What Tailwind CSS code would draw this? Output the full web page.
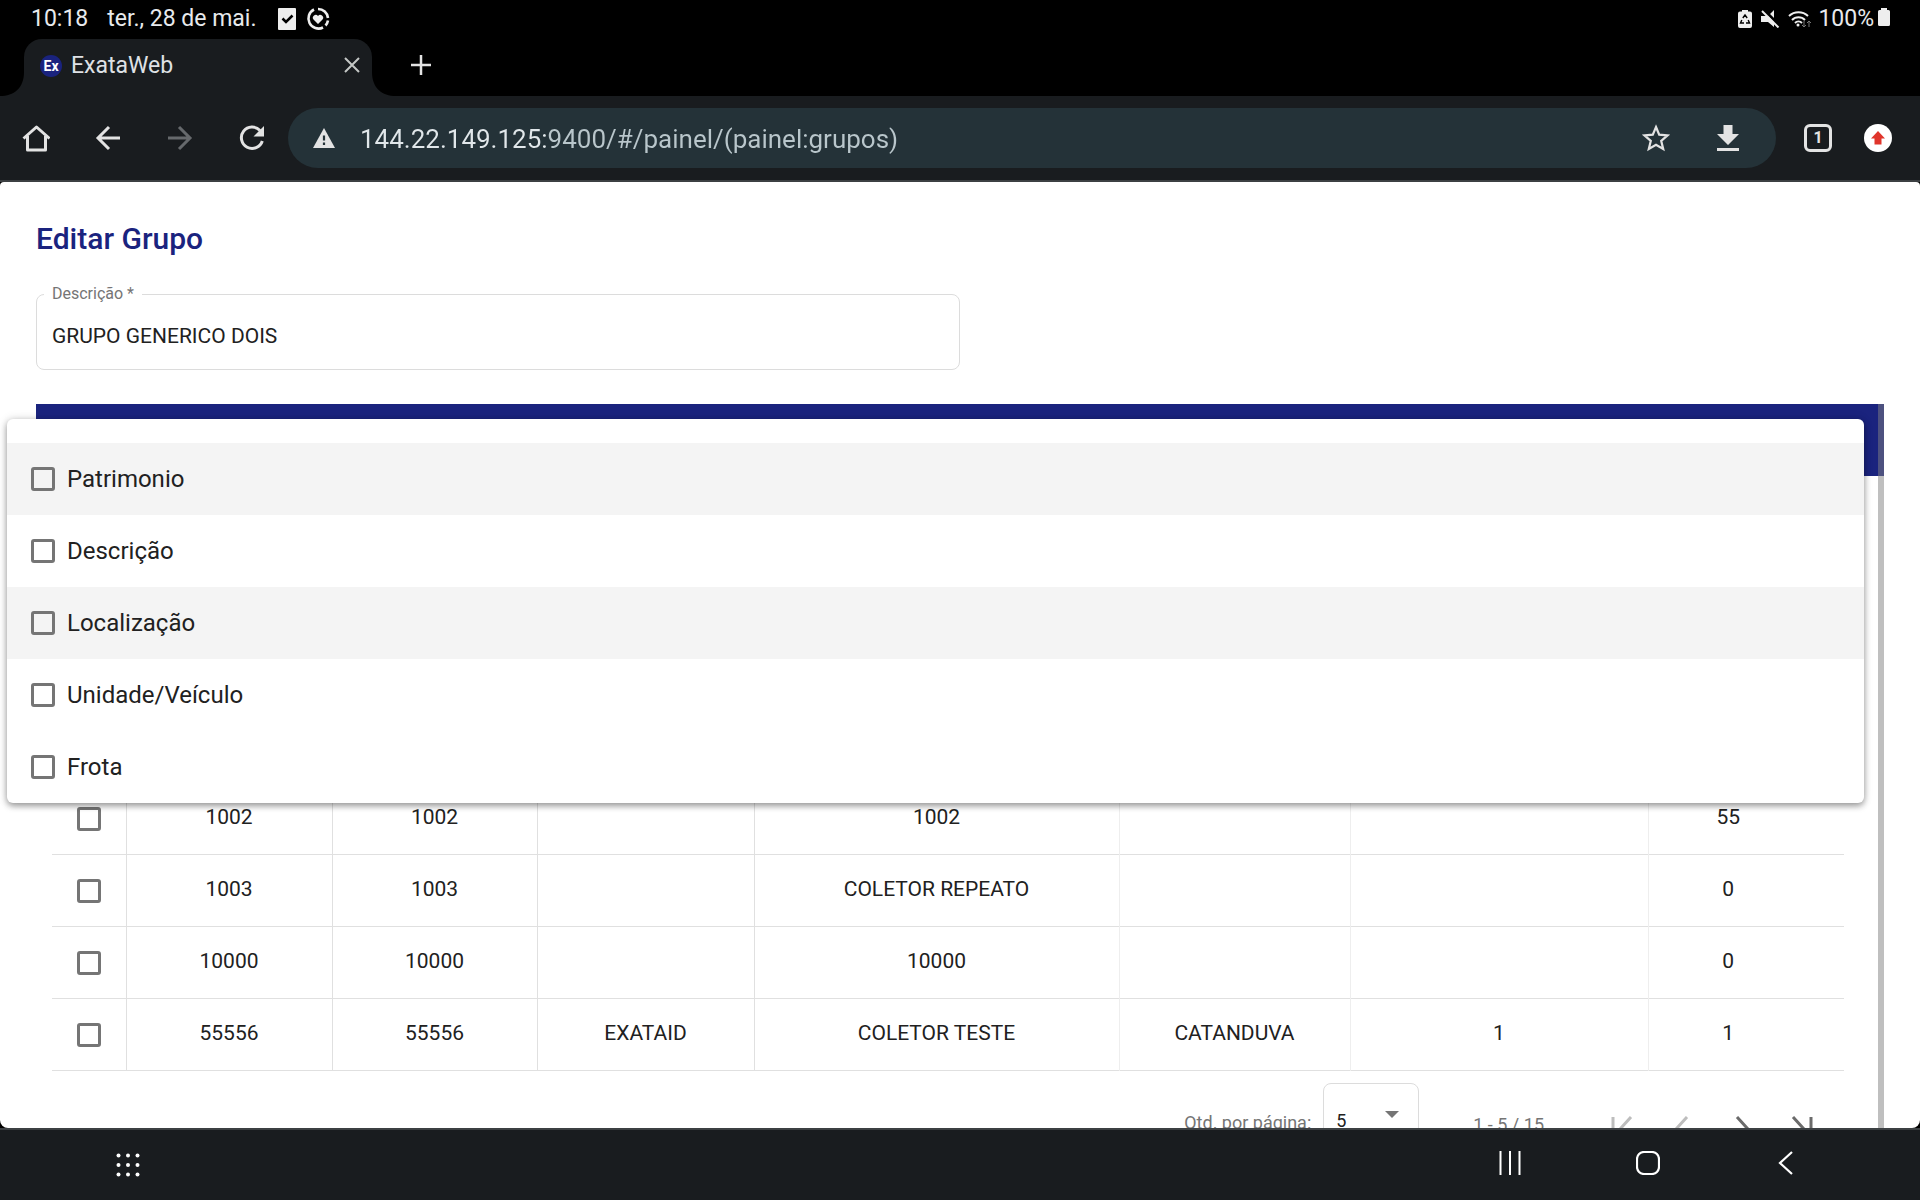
<!DOCTYPE html>
<html lang="pt-BR">
<head>
<meta charset="utf-8">
<meta name="viewport" content="width=device-width, initial-scale=1">
<title>ExataWeb</title>
<script src="https://cdn.jsdelivr.net/npm/@tailwindcss/browser@4"></script>
</head>
<body class="flex h-screen flex-col overflow-hidden bg-black font-['Roboto',sans-serif] text-[#212121]">

<!-- System status bar -->
<header class="flex h-[39px] shrink-0 items-center justify-between pr-[30px] pb-0.5 pl-[31px] text-[23px] leading-9 text-[#e8eaed]">
  <div class="flex items-center">
    <span>10:18</span>
    <span class="ml-[19px]">ter., 28 de mai.</span>
    <svg class="ml-5 size-[22px]" viewBox="0 0 22 22" fill="none"><rect x="2" width="18" height="22" rx="1" fill="#eee"/><path d="M6.500 10.500l3.500 3.500 6.500-6.500" stroke="#000" stroke-width="2.500"/></svg>
    <svg class="ml-2 size-6" viewBox="0 0 24 24" fill="none"><path d="M8 2.500a10 10 0 1 0 9 18M19.500 18.500a10 10 0 0 0 2.500-5M12 2a10 10 0 0 1 10 9" stroke="#eee" stroke-width="2.600"/><path d="M12 17l-4.500-4.500a2.700 2.700 0 0 1 4.500-3.500 2.700 2.700 0 0 1 4.500 3.500z" fill="#eee"/></svg>
  </div>
  <div class="flex items-center">
    <svg class="h-[18px] w-[14px]" viewBox="0 0 14 18"><path d="M4 0h6v1.500h2a2 2 0 0 1 2 2V16a2 2 0 0 1-2 2H2a2 2 0 0 1-2-2V3.500a2 2 0 0 1 2-2h2z" fill="#eee"/><path d="M4.800 8L7 5l2.200 3M3.800 10l-1.300 3H6M10.200 10l1.300 3H8" fill="none" stroke="#000" stroke-width="1.400"/></svg>
    <svg class="ml-[9px] h-[18px] w-[19px]" viewBox="0 0 19 18"><path d="M0 6h7l6-6v17l-6-5H0z" fill="#eee"/><path d="M3 0l17 17" stroke="#000" stroke-width="3"/><path d="M1 1l16.500 16.500" stroke="#eee" stroke-width="2"/></svg>
    <svg class="ml-2 h-[18px] w-6" viewBox="0 0 24 18" fill="none"><path d="M1 6a14 14 0 0 1 19 0M4 10a9 9 0 0 1 13 0M7 13a5 5 0 0 1 7 0" stroke="#eee" stroke-width="2"/><circle cx="10" cy="15" r="1.500" fill="#eee"/><path d="M16 11v6l-2-2m2 2l2-2M21 17v-6l-2 2m2-2l2 2" stroke="#777" stroke-width="1"/></svg>
    <span class="ml-1.5">100%</span>
    <svg class="mb-1 ml-1 h-[18px] w-3" viewBox="0 0 12 18"><path d="M3 0h6v2h1.500A1.500 1.500 0 0 1 12 3.500v13a1.500 1.500 0 0 1-1.500 1.500h-9A1.500 1.500 0 0 1 0 16.500v-13A1.500 1.500 0 0 1 1.500 2H3z" fill="#eee"/></svg>
  </div>
</header>

<!-- Tab strip -->
<div class="flex h-[57px] shrink-0 items-stretch">
  <svg class="h-full w-6" viewBox="0 0 24 57"><path d="M24 0v57H0c14 0 24-8 24-24z" fill="#191c1f"/></svg>
  <div class="flex w-[348px] items-center rounded-t-[18px] bg-[#191c1f] pr-3 pb-1 pl-4">
    <span class="flex size-[22px] items-center justify-center rounded-full bg-[#1a237e] text-sm font-bold text-white">Ex</span>
    <span class="ml-[9px] grow text-[23px] leading-9 text-[#dfe1e5]">ExataWeb</span>
    <button class="mb-0.5 flex" aria-label="Fechar guia"><svg class="size-4" viewBox="0 0 16 16"><path d="M1 1l14 14M15 1L1 15" stroke="#c4c7c5" stroke-width="2"/></svg></button>
  </div>
  <svg class="h-full w-6" viewBox="0 0 24 57"><path d="M0 0v57h24C10 57 0 49 0 33z" fill="#191c1f"/></svg>
  <button class="ml-[14px] flex items-center pb-1.5" aria-label="Nova guia"><svg class="size-[22px]" viewBox="0 0 22 22"><path d="M11 1v20M1 11h20" stroke="#e3e3e3" stroke-width="2.500"/></svg></button>
</div>

<!-- Browser toolbar -->
<nav class="flex h-[86px] shrink-0 items-center border-b-2 border-[#3c4043] bg-[#191c1f] pr-7 pl-[22px]">
  <button aria-label="Início"><svg class="size-7" viewBox="0 0 28 28"><path d="M1.500 14.500L14.500 3l13 11.500M5.500 12v14h18V12" fill="none" stroke="#e3e3e3" stroke-width="3" stroke-linejoin="round"/></svg></button>
  <button class="ml-[45px]" aria-label="Voltar"><svg class="size-[26px]" viewBox="0 0 26 26"><path d="M25 13H3M14 2L3 13l11 11" fill="none" stroke="#e3e3e3" stroke-width="3"/></svg></button>
  <button class="ml-[46px]" aria-label="Avançar"><svg class="size-[26px]" viewBox="0 0 26 26"><path d="M1 13h22M12 2l11 11-11 11" fill="none" stroke="#66696c" stroke-width="3"/></svg></button>
  <button class="ml-[46px]" aria-label="Recarregar"><svg class="size-[26px]" viewBox="0 0 26 26"><path d="M21 5.500A10.700 10.700 0 1 0 23.300 16" fill="none" stroke="#e3e3e3" stroke-width="3"/><path d="M25 1v10.500H14.500z" fill="#e3e3e3"/></svg></button>
  <div class="ml-[23px] flex h-15 grow items-center rounded-full bg-[#243238] pr-[37px] pl-[25px]">
    <svg class="h-5 w-[22px] shrink-0" viewBox="0 0 22 20"><path d="M11 0l11 20H0z" fill="#e3e3e3"/><path d="M11 7.500v5M11 14.500v2.500" stroke="#243238" stroke-width="2.200"/></svg>
    <input class="ml-[25px] min-w-0 grow bg-[linear-gradient(90deg,#e1e7ea_186px,#b9c6cb_186px)] bg-clip-text pt-0.5 text-[26px] leading-9 text-transparent outline-none" aria-label="Endereço" value="144.22.149.125:9400/#/painel/(painel:grupos)">
    <button aria-label="Favoritar"><svg class="size-7" viewBox="0 0 28 28"><path d="M14 3l3.200 7.700 8.300.7-6.300 5.400 2 8.200-7.200-4.300L6.800 25l2-8.200-6.300-5.400 8.300-.7z" fill="none" stroke="#e3e3e3" stroke-width="2.200"/></svg></button>
    <button class="ml-[47px]" aria-label="Baixar"><svg class="h-[26px] w-[22px]" viewBox="0 0 22 26"><path d="M6.500 0h9v9H22L11 20 0 9h6.500zM0 23h22v3H0z" fill="#e3e3e3"/></svg></button>
  </div>
  <button class="ml-7 flex size-7 items-center justify-center rounded-md border-3 border-[#e3e3e3] text-base font-bold text-[#e3e3e3]" aria-label="Guias abertas">1</button>
  <button class="ml-8" aria-label="Atualizar"><svg class="size-7" viewBox="0 0 28 28"><circle cx="14" cy="14" r="14" fill="#fff"/><path d="M14 7l7 7.500h-3.500v6h-7v-6H7z" fill="#e0352b"/></svg></button>
</nav>

<!-- Page viewport -->
<main class="relative flex min-h-0 grow flex-col overflow-hidden rounded-t-sm rounded-b-lg bg-white px-9 pt-9">
  <h1 class="text-3xl leading-[42px] font-medium text-[#1a237e]">Editar Grupo</h1>

  <fieldset class="mt-[22px] h-[90px] w-1/2 rounded-lg border border-[#dcdcdc] px-[7px] pb-4">
    <legend class="px-2 text-base leading-6 text-[#757575]"><label for="descricao">Descrição *</label></legend>
    <input id="descricao" class="w-full px-2 pt-4 text-[21px] leading-7 outline-none" value="GRUPO GENERICO DOIS">
  </fieldset>

  <section class="relative mt-[34px] flex min-h-0 grow flex-col">
    <div class="h-[72px] shrink-0 bg-[#1a237e]"></div>
    <div class="shrink-0 px-4 pt-[307px] pr-10">
      <table class="w-full table-fixed border-collapse text-center text-[21px]">
        <colgroup><col class="w-[74px]"><col class="w-[206px]"><col class="w-[205px]"><col class="w-[217px]"><col class="w-[365px]"><col class="w-[231px]"><col class="w-[298px]"><col class="w-[196px]"></colgroup>
        <tbody id="rows"></tbody>
      </table>
      <div class="flex h-20 items-start justify-end pt-3 text-lg text-[#757575]">
        <label for="qtd" class="pt-6 leading-8">Qtd. por página:</label>
        <div class="relative ml-3">
          <select id="qtd" class="h-[76px] w-24 appearance-none rounded-lg border border-[#dcdcdc] px-3 text-[#212121]"><option>5</option></select>
          <svg class="pointer-events-none absolute top-7 right-5 h-[7px] w-[14px]" viewBox="0 0 14 7"><path d="M0 0h14L7 7z" fill="#757575"/></svg>
        </div>
        <span class="ml-[54px] pt-[26px] leading-8">1 - 5 / 15</span>
        <div class="flex gap-9 pt-[33px] pr-[30px] pl-[66px]">
          <button aria-label="Primeira página"><svg class="size-6" viewBox="0 0 24 24" fill="none" stroke="#bdbdbd" stroke-width="3"><path d="M3 1v22M21 1L11 12l10 11"/></svg></button>
          <button aria-label="Página anterior"><svg class="size-6" viewBox="0 0 24 24" fill="none" stroke="#bdbdbd" stroke-width="3"><path d="M17 1L7 12l10 11"/></svg></button>
          <button aria-label="Próxima página"><svg class="size-6" viewBox="0 0 24 24" fill="none" stroke="#6b6b6b" stroke-width="3"><path d="M7 1l10 11L7 23"/></svg></button>
          <button aria-label="Última página"><svg class="size-6" viewBox="0 0 24 24" fill="none" stroke="#6b6b6b" stroke-width="3"><path d="M3 1l10 11L3 23M21 1v22"/></svg></button>
        </div>
      </div>
    </div>
    <!-- Overlay scrollbar thumb -->
    <div class="absolute inset-y-0 right-0 w-[6px] bg-[#808080]/50"></div>
  </section>

  <!-- Column filter menu -->
  <div class="absolute top-[237px] right-14 left-[7px] overflow-hidden rounded-md bg-white pt-6 text-2xl shadow-[0_3px_6px_rgba(0,0,0,0.35),0_0_10px_rgba(0,0,0,0.15)]">
    <label class="flex h-18 items-center gap-3 bg-[#f4f4f4] px-6"><input type="checkbox" class="size-6 appearance-none rounded-[3px] border-3 border-[#757575]">Patrimonio</label>
    <label class="flex h-18 items-center gap-3 px-6"><input type="checkbox" class="size-6 appearance-none rounded-[3px] border-3 border-[#757575]">Descrição</label>
    <label class="flex h-18 items-center gap-3 bg-[#f4f4f4] px-6"><input type="checkbox" class="size-6 appearance-none rounded-[3px] border-3 border-[#757575]">Localização</label>
    <label class="flex h-18 items-center gap-3 px-6"><input type="checkbox" class="size-6 appearance-none rounded-[3px] border-3 border-[#757575]">Unidade/Veículo</label>
    <label class="flex h-18 items-center gap-3 px-6"><input type="checkbox" class="size-6 appearance-none rounded-[3px] border-3 border-[#757575]">Frota</label>
  </div>
</main>

<!-- System navigation bar -->
<footer class="flex h-18 shrink-0 items-center border-t-2 border-[#3c4043] bg-[#191c1f] pr-[122px] pl-[116px]">
  <button aria-label="Aplicativos"><svg class="size-6" viewBox="0 0 24 24" fill="#fff"><circle cx="2.500" cy="2.500" r="2"/><circle cx="12" cy="2.500" r="2"/><circle cx="21.500" cy="2.500" r="2"/><circle cx="2.500" cy="12" r="2"/><circle cx="12" cy="12" r="2"/><circle cx="21.500" cy="12" r="2"/><circle cx="2.500" cy="21.500" r="2"/><circle cx="12" cy="21.500" r="2"/><circle cx="21.500" cy="21.500" r="2"/></svg></button>
  <div class="mb-1 ml-auto flex gap-[114px]">
    <button aria-label="Recentes"><svg class="size-6" viewBox="0 0 24 24"><path d="M2.500 0v24M12 0v24M21.500 0v24" stroke="#fff" stroke-width="2"/></svg></button>
    <button aria-label="Tela inicial"><svg class="size-6" viewBox="0 0 24 24"><rect x="1" y="1" width="22" height="22" rx="7" fill="none" stroke="#fff" stroke-width="2.200"/></svg></button>
    <button aria-label="Voltar ao anterior"><svg class="size-6" viewBox="0 0 24 24"><path d="M18 1L6 12l12 11" fill="none" stroke="#fff" stroke-width="2.200"/></svg></button>
  </div>
</footer>

<script>
const data = [
  ['1002', '1002', '', '1002', '', '', '55'],
  ['1003', '1003', '', 'COLETOR REPEATO', '', '', '0'],
  ['10000', '10000', '', '10000', '', '', '0'],
  ['55556', '55556', 'EXATAID', 'COLETOR TESTE', 'CATANDUVA', '1', '1'],
];
document.getElementById('rows').innerHTML = data.map(r =>
  '<tr class="h-18 border-b border-[#e0e0e0]">' +
  '<td class="border-r border-[#e0e0e0]"><input type="checkbox" aria-label="Selecionar ' + r[0] + '" class="block mx-auto size-6 appearance-none rounded-[3px] border-3 border-[#757575]"></td>' +
  r.map((c, i) => i < 6
    ? '<td class="border-r ' + (i < 3 ? 'border-[#e0e0e0]' : 'border-[#eeeeee]') + ' pb-0.5">' + c + '</td>'
    : '<td class="pr-9 pb-0.5">' + c + '</td>').join('') + '</tr>').join('');
</script>
</body>
</html>
